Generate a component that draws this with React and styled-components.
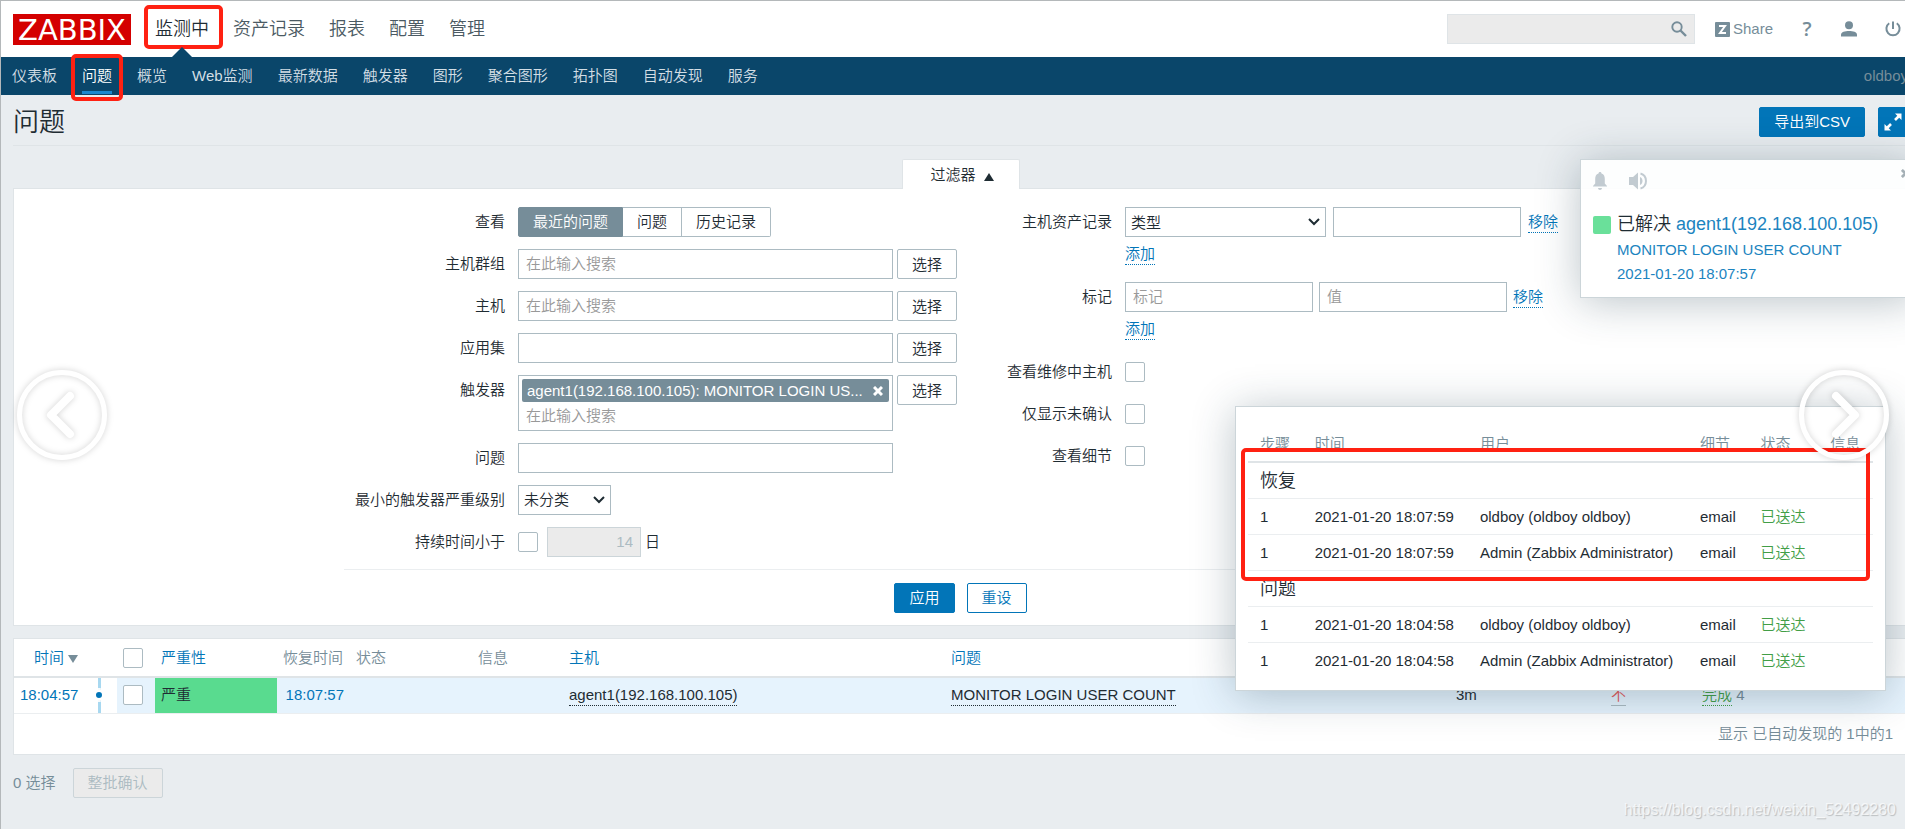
import styled, { createGlobalStyle, css } from "styled-components";

const GlobalStyle = createGlobalStyle`
  * {
    box-sizing: border-box;
  }
  body {
    margin: 0;
    overflow: hidden;
    background: #e9edf0;
    color: #1f2c33;
    font-family: "Liberation Sans", "Noto Sans CJK SC", sans-serif;
    font-weight: 350;
    font-size: 15px;
    line-height: 20px;
  }
  button, input, select {
    font: inherit;
    color: inherit;
    margin: 0;
  }
  a {
    color: #0275b8;
    text-decoration: none;
  }
`;

const mainMenu = ["监测中", "资产记录", "报表", "配置", "管理"];
const subMenu = [
  "仪表板",
  "问题",
  "概览",
  "Web监测",
  "最新数据",
  "触发器",
  "图形",
  "聚合图形",
  "拓扑图",
  "自动发现",
  "服务",
];
const actions = [
  {
    title: "恢复",
    rows: [
      ["2021-01-20 18:07:59", "oldboy (oldboy oldboy)"],
      ["2021-01-20 18:07:59", "Admin (Zabbix Administrator)"],
    ],
  },
  {
    title: "问题",
    rows: [
      ["2021-01-20 18:04:58", "oldboy (oldboy oldboy)"],
      ["2021-01-20 18:04:58", "Admin (Zabbix Administrator)"],
    ],
  },
];

const SearchIcon = () => (
  <svg width="16" height="16" viewBox="0 0 16 16" fill="none" stroke="#768d99">
    <circle cx="6" cy="6" r="4.7" strokeWidth="1.9" />
    <path d="M9.5 9.5 L15 15" strokeWidth="2.4" />
  </svg>
);

const ShareIcon = () => (
  <svg width="15" height="15" viewBox="0 0 15 15">
    <rect width="15" height="15" rx="1" fill="#768d99" />
    <path d="M4 4 H10 L5 11 H11" fill="none" stroke="#fff" strokeWidth="2" />
  </svg>
);

const UserIcon = () => (
  <svg width="16" height="16" viewBox="0 0 16 16" fill="#768d99">
    <circle cx="8" cy="4.3" r="4" />
    <path d="M0 15.5 V13.5 C0 11 4 10 8 10 S16 11 16 13.5 V15.5 Z" />
  </svg>
);

const PowerIcon = () => (
  <svg width="16" height="16" viewBox="0 0 16 16" fill="none" stroke="#768d99" strokeWidth="2">
    <path d="M8 0.5 V8" />
    <path d="M4.2 2.3 A6.6 6.6 0 1 0 11.8 2.3" />
  </svg>
);

const ExpandIcon = () => (
  <svg width="20" height="20" viewBox="0 0 20 20" fill="#fff" stroke="#fff">
    <path d="M12 1.5 H18.5 V8 Z M8 18.5 H1.5 V12 Z" stroke="none" />
    <path d="M12 8 L16 4 M8 12 L4 16" strokeWidth="2.6" />
  </svg>
);

const BellIcon = () => (
  <svg width="14" height="18" viewBox="0 0 14 18" fill="#c2cbd1">
    <path d="M7 0 C8 0 8.5 0.7 8.5 1.6 C11 2.5 11.8 4.5 11.8 7 V11.5 L14 14 V14.5 H0 V14 L2.2 11.5 V7 C2.2 4.5 3 2.5 5.5 1.6 C5.5 0.7 6 0 7 0 Z" />
    <path d="M5 16 H9 C9 17.2 8 18 7 18 S5 17.2 5 16 Z" />
  </svg>
);

const SpeakerIcon = () => (
  <svg width="18" height="18" viewBox="0 0 18 18" fill="#c2cbd1">
    <path d="M0 5 H4 L9 0.5 V17.5 L4 13 H0 Z" />
    <path d="M11 5 C13 6 13.5 7.5 13.5 9 S13 12 11 13 Z" />
    <path d="M11.5 1.5 C18.8 3.5 18.8 14.5 11.5 16.5" fill="none" stroke="#c2cbd1" strokeWidth="2" />
  </svg>
);

const CrossIcon = ({ color, size }) => (
  <svg width={size} height={size} viewBox="0 0 10 10" stroke={color} strokeWidth="3">
    <path d="M1 1 L9 9 M9 1 L1 9" />
  </svg>
);

const ArrowCircle = ({ flip }) => (
  <svg width="106" height="106" viewBox="0 0 106 106" fill="none" stroke="#fff">
    <circle cx="53" cy="53" r="42.5" strokeWidth="5" />
    <path
      d={flip ? "M45 34 L64 53 L45 72" : "M61 34 L42 53 L61 72"}
      strokeWidth="8"
      strokeLinecap="round"
      strokeLinejoin="round"
    />
  </svg>
);

const App = () => {
  return (
    <Viewport>
      <GlobalStyle />
      <Page>
        <Header>
          <Logo href="#">ZABBIX</Logo>
          <MainNav>
            {mainMenu.map((item, index) => (
              <MainLink key={item} href="#" $active={index === 0}>
                {item}
                {index === 0 && <Marker $top={4} $bottom={8} $side={-11} $right={-14} />}
              </MainLink>
            ))}
          </MainNav>
          <SearchBox>
            <input type="text" aria-label="搜索" />
            <IconButton aria-label="搜索">
              <SearchIcon />
            </IconButton>
          </SearchBox>
          <ShareLink href="#">
            <ShareIcon />
            Share
          </ShareLink>
          <UserLinks>
            <HelpLink href="#">?</HelpLink>
            <a href="#" aria-label="用户">
              <UserIcon />
            </a>
            <a href="#" aria-label="退出">
              <PowerIcon />
            </a>
          </UserLinks>
        </Header>

        <SubNav>
          {subMenu.map((item) => (
            <SubLink key={item} href="#" $active={item === "问题"}>
              {item}
              {item === "问题" && <Marker $top={-3} $bottom={-6} $side={-11} />}
            </SubLink>
          ))}
          <UserName>oldboy</UserName>
        </SubNav>

        <TitleBar>
          <h1>问题</h1>
          <Button $primary>导出到CSV</Button>
          <SquareButton $primary aria-label="全屏">
            <ExpandIcon />
          </SquareButton>
        </TitleBar>

        <Main>
          <FilterTab>
            过滤器 <Triangle $up />
          </FilterTab>
          <Filter>
            <FilterColumns>
              <Column>
                <Row>
                  <Label $width={161}>查看</Label>
                  <Segments>
                    <Segment $active>最近的问题</Segment>
                    <Segment>问题</Segment>
                    <Segment>历史记录</Segment>
                  </Segments>
                </Row>
                <Row>
                  <Label as="label" htmlFor="groups" $width={161}>主机群组</Label>
                  <Field>
                    <Input id="groups" $width={375} placeholder="在此输入搜索" />
                    <Button>选择</Button>
                  </Field>
                </Row>
                <Row>
                  <Label as="label" htmlFor="hosts" $width={161}>主机</Label>
                  <Field>
                    <Input id="hosts" $width={375} placeholder="在此输入搜索" />
                    <Button>选择</Button>
                  </Field>
                </Row>
                <Row>
                  <Label as="label" htmlFor="application" $width={161}>应用集</Label>
                  <Field>
                    <Input id="application" $width={375} />
                    <Button>选择</Button>
                  </Field>
                </Row>
                <Row>
                  <Label as="label" htmlFor="triggers" $width={161}>触发器</Label>
                  <Field>
                    <MultiSelect>
                      <Tag>
                        <span>agent1(192.168.100.105): MONITOR LOGIN US...</span>
                        <IconButton aria-label="移除">
                          <CrossIcon color="#fff" size={10} />
                        </IconButton>
                      </Tag>
                      <input id="triggers" placeholder="在此输入搜索" />
                    </MultiSelect>
                    <Button>选择</Button>
                  </Field>
                </Row>
                <Row>
                  <Label as="label" htmlFor="problem" $width={161}>问题</Label>
                  <Input id="problem" $width={375} />
                </Row>
                <Row>
                  <Label as="label" htmlFor="severity" $width={161}>最小的触发器严重级别</Label>
                  <Select id="severity" $width={93}>
                    <option>未分类</option>
                  </Select>
                </Row>
                <Row>
                  <Label as="label" htmlFor="age" $width={161}>持续时间小于</Label>
                  <Field>
                    <Checkbox id="age" />
                    <AgeInput aria-label="日" defaultValue="14" disabled $width={94} />
                    日
                  </Field>
                </Row>
              </Column>

              <Column>
                <Row>
                  <Label as="label" htmlFor="inventory" $width={155}>主机资产记录</Label>
                  <FieldStack>
                    <Field $gap={7}>
                      <Select id="inventory" $width={201}>
                        <option>类型</option>
                      </Select>
                      <Input aria-label="主机资产记录" $width={188} />
                      <DottedLink href="#">移除</DottedLink>
                    </Field>
                    <DottedLink href="#">添加</DottedLink>
                  </FieldStack>
                </Row>
                <Row>
                  <Label as="label" htmlFor="tag" $width={155}>标记</Label>
                  <FieldStack>
                    <Field $gap={6}>
                      <Input id="tag" $width={188} placeholder="标记" />
                      <Input aria-label="值" $width={188} placeholder="值" />
                      <DottedLink href="#">移除</DottedLink>
                    </Field>
                    <DottedLink href="#">添加</DottedLink>
                  </FieldStack>
                </Row>
                {["查看维修中主机", "仅显示未确认", "查看细节"].map((item) => (
                  <Row key={item}>
                    <Label as="label" htmlFor={item} $width={155}>{item}</Label>
                    <Field>
                      <Checkbox id={item} />
                    </Field>
                  </Row>
                ))}
              </Column>
            </FilterColumns>
            <FilterButtons>
              <Button $primary>应用</Button>
              <Button $outline>重设</Button>
            </FilterButtons>
          </Filter>

          <TablePanel>
            <ProblemTable>
              <colgroup>
                <col style={{ width: 70 }} />
                <col style={{ width: 33 }} />
                <col style={{ width: 38 }} />
                <col style={{ width: 122 }} />
                <col style={{ width: 73 }} />
                <col style={{ width: 122 }} />
                <col style={{ width: 91 }} />
                <col style={{ width: 382 }} />
                <col style={{ width: 505 }} />
                <col style={{ width: 155 }} />
                <col style={{ width: 91 }} />
                <col />
              </colgroup>
              <thead>
                <tr>
                  <th className="right">
                    <SortLink href="#">
                      时间 <Triangle />
                    </SortLink>
                  </th>
                  <th />
                  <th>
                    <Checkbox aria-label="全选" />
                  </th>
                  <th>
                    <a href="#">严重性</a>
                  </th>
                  <th>恢复时间</th>
                  <th>状态</th>
                  <th>信息</th>
                  <th>
                    <a href="#">主机</a>
                  </th>
                  <th>
                    <a href="#">问题</a>
                  </th>
                  <th colSpan={3} />
                </tr>
              </thead>
              <tbody>
                <tr>
                  <td className="right plain">
                    <a href="#">18:04:57</a>
                  </td>
                  <td className="timeline plain">
                    <TimelineDot />
                  </td>
                  <td>
                    <Checkbox aria-label="选择" />
                  </td>
                  <td className="severity">严重</td>
                  <td className="right">
                    <a href="#">18:07:57</a>
                  </td>
                  <td />
                  <td />
                  <td>
                    <DottedLink href="#" $color="#1f2c33">agent1(192.168.100.105)</DottedLink>
                  </td>
                  <td>
                    <DottedLink href="#" $color="#1f2c33">MONITOR LOGIN USER COUNT</DottedLink>
                  </td>
                  <td>3m</td>
                  <td>
                    <AckLink href="#">不</AckLink>
                  </td>
                  <td>
                    <DottedLink href="#" $color="#429e47">完成</DottedLink> <Muted>4</Muted>
                  </td>
                </tr>
              </tbody>
            </ProblemTable>
            <TableStats>显示 已自动发现的 1中的1</TableStats>
          </TablePanel>

          <BulkActions>
            <Muted>0 选择</Muted>
            <Button disabled>整批确认</Button>
          </BulkActions>
        </Main>
      </Page>

      <Notification>
        <NotificationBar>
          <IconButton aria-label="暂停">
            <BellIcon />
          </IconButton>
          <IconButton aria-label="静音">
            <SpeakerIcon />
          </IconButton>
          <IconButton aria-label="关闭">
            <CrossIcon color="#a5b0b6" size={9} />
          </IconButton>
        </NotificationBar>
        <NotificationBody>
          <SeverityBox />
          <div>
            <h4>
              已解决 <a href="#">agent1(192.168.100.105)</a>
            </h4>
            <a href="#">MONITOR LOGIN USER COUNT</a>
            <a href="#">2021-01-20 18:07:57</a>
          </div>
        </NotificationBody>
      </Notification>

      <Popup>
        <ActionTable>
          <thead>
            <tr>
              <th>步骤</th>
              <th>时间</th>
              <th>用户</th>
              <th>细节</th>
              <th>状态</th>
              <th>信息</th>
            </tr>
          </thead>
          {actions.map((group) => (
            <tbody key={group.title}>
              <tr>
                <th colSpan={6}>{group.title}</th>
              </tr>
              {group.rows.map(([time, user]) => (
                <tr key={user}>
                  <td>1</td>
                  <td>{time}</td>
                  <td>{user}</td>
                  <td>email</td>
                  <td className="sent">已送达</td>
                  <td />
                </tr>
              ))}
            </tbody>
          ))}
        </ActionTable>
        <Marker $top={41} $bottom={109} $side={5} $right={15} />
      </Popup>

      <PageArrow $side="left" aria-label="上一张">
        <ArrowCircle />
      </PageArrow>
      <PageArrow $side="right" aria-label="下一张">
        <ArrowCircle flip />
      </PageArrow>
      <Watermark>https://blog.csdn.net/weixin_52492280</Watermark>
    </Viewport>
  );
};

const Viewport = styled.div`
  position: relative;
  min-height: 100vh;
  overflow: hidden;
  border-top: 1px solid #b4b8ba;
  border-left: 1px solid #b4b8ba;
`;

/* the page is a little wider than the window */
const Page = styled.div`
  width: calc(100% + 15px);
`;

const Marker = styled.span`
  position: absolute;
  top: ${(props) => props.$top}px;
  bottom: ${(props) => props.$bottom}px;
  left: ${(props) => props.$side}px;
  right: ${(props) => props.$right ?? props.$side}px;
  border: 4px solid #ff2112;
  border-radius: 5px;
  pointer-events: none;
`;

const Header = styled.header`
  display: flex;
  align-items: center;
  height: 56px;
  padding: 0 19px 0 12px;
  background: #fff;
`;

const Logo = styled.a`
  width: 118px;
  height: 31px;
  background: #d40000;
  color: #fff;
  font-family: "DejaVu Sans", sans-serif;
  font-weight: 400;
  font-size: 29px;
  line-height: 32px;
  text-align: center;
`;

const MainNav = styled.nav`
  display: flex;
  gap: 24px;
  margin-left: 24px;
  margin-right: auto;
`;

const MainLink = styled.a`
  position: relative;
  font-size: 18px;
  line-height: 56px;
  color: ${(props) => (props.$active ? "#1f2c33" : "#4b5a63")};
  ${(props) =>
    props.$active &&
    css`
      &::after {
        content: "";
        position: absolute;
        bottom: 0;
        left: calc(50% - 10px);
        border: 10px solid transparent;
        border-top: 0;
        border-bottom-color: #0a466a;
      }
    `}
`;

const IconButton = styled.button`
  display: flex;
  padding: 0;
  border: 0;
  background: none;
`;

const SearchBox = styled.form`
  display: flex;
  align-items: center;
  width: 248px;
  height: 30px;
  padding-right: 7px;
  background: #ebebeb;
  border: 1px solid #dfe4e7;
  input {
    flex: 1;
    min-width: 0;
    border: 0;
    background: none;
  }
`;

const ShareLink = styled.a`
  display: flex;
  align-items: center;
  gap: 3px;
  margin-left: 20px;
  color: #768d99;
`;

const UserLinks = styled.div`
  display: flex;
  align-items: center;
  gap: 28px;
  margin-left: 28px;
  a {
    display: flex;
  }
`;

const HelpLink = styled.a`
  justify-content: center;
  width: 12px;
  color: #768d99;
  font-family: "Open Sans", sans-serif;
  font-weight: 600;
  font-size: 20px;
`;

const SubNav = styled.nav`
  display: flex;
  gap: 25px;
  height: 38px;
  padding: 0 12px 0 11px;
  background: #0a466a;
`;

const SubLink = styled.a`
  position: relative;
  line-height: 38px;
  color: ${(props) => (props.$active ? "#fff" : "#d3dee5")};
  ${(props) =>
    props.$active &&
    css`
      &::after {
        content: "";
        position: absolute;
        left: 0;
        right: 0;
        bottom: 1px;
        height: 3px;
        background: #1a87ce;
      }
    `}
`;

const UserName = styled.span`
  margin-left: auto;
  line-height: 38px;
  color: #768d99;
`;

const buttonColors = (props) => {
  if (props.disabled) return "background: #ebebeb; border-color: #ccd5d9; color: #acbbc2;";
  if (props.$primary) return "background: #0275b8; border-color: #0275b8; color: #fff;";
  if (props.$outline) return "background: #fff; border-color: #0275b8; color: #0275b8;";
  return "background: #fff; border-color: #acbbc2; color: #1f2c33;";
};

const Button = styled.button`
  height: 30px;
  padding: 0 14px;
  border: 1px solid;
  border-radius: 2px;
  white-space: nowrap;
  ${buttonColors}
`;

const SquareButton = styled(Button)`
  display: flex;
  align-items: center;
  justify-content: center;
  width: 30px;
  padding: 0;
`;

const TitleBar = styled.div`
  display: flex;
  align-items: center;
  gap: 13px;
  height: 51px;
  margin: 0 12px;
  padding-top: 3px;
  border-bottom: 1px solid #dfe4e7;
  h1 {
    flex: 1;
    margin: 0;
    font-weight: 350;
    font-size: 26px;
  }
`;

const Main = styled.main`
  padding: 13px 12px 0;
`;

const FilterTab = styled.button`
  position: relative;
  display: flex;
  align-items: center;
  gap: 8px;
  width: 118px;
  height: 30px;
  margin: 0 auto -1px;
  padding: 0 24px 0 28px;
  background: #fff;
  border: 1px solid #dfe4e7;
  border-bottom: 0;
  border-radius: 2px 2px 0 0;
`;

const Triangle = styled.span`
  display: inline-block;
  border: 5px solid transparent;
  ${(props) =>
    props.$up
      ? "border-top: 0; border-bottom: 8px solid #1f2c33; margin-top: 4px;"
      : "border-bottom: 0; border-top: 8px solid #768d99; margin-top: 2px;"}
`;

const Filter = styled.form`
  padding: 18px 12px 12px;
  background: #fff;
  border: 1px solid #dfe4e7;
`;

const FilterColumns = styled.div`
  display: flex;
  max-width: 1233px;
  margin: 0 auto;
  padding-bottom: 12px;
  border-bottom: 1px solid #ebeef0;
`;

const Column = styled.div`
  display: flex;
  flex-direction: column;
  gap: 12px;
`;

const Row = styled.div`
  display: flex;
  gap: 13px;
`;

const Label = styled.span`
  width: ${(props) => props.$width}px;
  line-height: 30px;
  text-align: right;
  white-space: nowrap;
`;

const Field = styled.div`
  display: flex;
  align-items: flex-start;
  gap: ${(props) => props.$gap ?? 4}px;
  line-height: 30px;
`;

const FieldStack = styled.div`
  display: flex;
  flex-direction: column;
  align-items: flex-start;
  gap: 2px;
`;

const Segments = styled.div`
  display: flex;
`;

const Segment = styled.button`
  height: 30px;
  padding: 0 14px;
  border: 1px solid #acbbc2;
  background: #fff;
  & + & {
    border-left: 0;
  }
  &:first-child {
    border-radius: 2px 0 0 2px;
  }
  &:last-child {
    border-radius: 0 2px 2px 0;
  }
  ${(props) => props.$active && "background: #768d99; border-color: #768d99; color: #fff;"}
`;

const Input = styled.input`
  width: ${(props) => props.$width}px;
  height: 30px;
  padding: 0 7px;
  background: #fff;
  border: 1px solid #acbbc2;
  &::placeholder {
    color: #999;
  }
`;

const AgeInput = styled(Input)`
  margin-left: 5px;
  background: #ebebeb;
  border-color: #ccd5d9;
  color: #acbbc2;
  text-align: right;
`;

const chevron = `url("data:image/svg+xml,%3Csvg xmlns='http://www.w3.org/2000/svg' width='12' height='8' fill='none' stroke='%231f2c33' stroke-width='2'%3E%3Cpath d='M1 1 L6 6 L11 1'/%3E%3C/svg%3E")`;

const Select = styled.select`
  appearance: none;
  width: ${(props) => props.$width}px;
  height: 30px;
  padding: 0 5px;
  background: #fff ${chevron} right 5px center no-repeat;
  border: 1px solid #acbbc2;
  border-radius: 0;
`;

const Checkbox = styled.input.attrs({ type: "checkbox" })`
  appearance: none;
  display: block;
  width: 20px;
  height: 20px;
  background: #fff;
  border: 1px solid #acbbc2;
  border-radius: 2px;
  ${Field} & {
    margin: 5px 0;
  }
`;

const MultiSelect = styled.div`
  width: 375px;
  height: 56px;
  padding: 3px;
  border: 1px solid #acbbc2;
  input {
    display: block;
    width: 100%;
    height: 27px;
    padding: 0 4px;
    border: 0;
    background: none;
  }
  input::placeholder {
    color: #999;
  }
`;

const Tag = styled.div`
  display: flex;
  align-items: center;
  justify-content: space-between;
  height: 23px;
  padding: 0 6px 0 5px;
  background: #768d99;
  border-radius: 2px;
  color: #fff;
  white-space: nowrap;
`;

const DottedLink = styled.a`
  display: inline-block;
  line-height: 20px;
  border-bottom: 1px dotted;
  color: ${(props) => props.$color ?? "#0275b8"};
  ${Field} & {
    margin-top: 5px;
  }
  ${FieldStack} > & {
    margin: 5px 0 5px;
  }
`;

const AckLink = styled(DottedLink)`
  color: #e45959;
  border-bottom: 1px solid #acbbc2;
`;

const FilterButtons = styled.div`
  display: flex;
  justify-content: center;
  gap: 12px;
  padding-top: 13px;
`;

const TablePanel = styled.section`
  margin-top: 12px;
  background: #fff;
  border: 1px solid #dfe4e7;
`;

const ProblemTable = styled.table`
  width: 100%;
  table-layout: fixed;
  border-collapse: collapse;
  th,
  td {
    padding: 0 6px;
    text-align: left;
    white-space: nowrap;
  }
  th {
    height: 38px;
    font-weight: 350;
    color: #768d99;
    border-bottom: 2px solid #dfe4e7;
  }
  td {
    height: 36px;
    background: #e6f3fd;
    border-bottom: 1px solid #ebeef0;
  }
  .right {
    text-align: right;
  }
  .plain {
    background: #fff;
  }
  .severity {
    background: #59db8f;
  }
  .timeline {
    background: linear-gradient(#a8d8f0, #a8d8f0) 14px 0 / 3px 100% no-repeat #fff;
  }
`;

const SortLink = styled.a`
  display: inline-flex;
  align-items: center;
  gap: 4px;
`;

const TimelineDot = styled.span`
  display: block;
  width: 12px;
  height: 12px;
  margin-left: 3px;
  background: #0275b8;
  border: 3px solid #fff;
  border-radius: 50%;
  outline: 1px solid #fff;
`;

const Muted = styled.span`
  color: #768d99;
`;

const TableStats = styled.div`
  padding: 10px 14px 10px 0;
  text-align: right;
  color: #768d99;
`;

const BulkActions = styled.div`
  display: flex;
  align-items: center;
  gap: 17px;
  margin-top: 13px;
`;

const floating = css`
  position: absolute;
  border: 1px solid #ccd5d9;
  box-shadow: 0 4px 40px rgba(31, 60, 75, 0.3);
`;

const Notification = styled.aside`
  ${floating}
  top: 158px;
  right: -12px;
  width: 337px;
  height: 139px;
  background: rgba(255, 255, 255, 0.9);
`;

const NotificationBar = styled.div`
  display: flex;
  align-items: center;
  gap: 22px;
  padding: 12px 6px 0 12px;
  button:last-child {
    margin: -16px 0 0 auto;
  }
`;

const NotificationBody = styled.div`
  display: flex;
  gap: 6px;
  padding: 20px 12px;
  h4 {
    margin: 0;
    font-weight: 350;
    font-size: 18px;
    line-height: 28px;
  }
  a {
    color: #1c84c0;
  }
  div > a {
    display: block;
    line-height: 24px;
  }
`;

const SeverityBox = styled.span`
  width: 18px;
  height: 18px;
  margin-top: 6px;
  background: #6ae09a;
  border-radius: 2px;
`;

const Popup = styled.section`
  ${floating}
  top: 405px;
  right: 19px;
  width: 651px;
  padding: 18px 12px 12px;
  background: #fff;
`;

const ActionTable = styled.table`
  width: 100%;
  border-collapse: collapse;
  th,
  td {
    height: 36px;
    padding: 1px 12px 0;
    text-align: left;
    white-space: nowrap;
    border-bottom: 1px solid #ebeef0;
  }
  th {
    font-weight: 350;
  }
  thead th {
    height: 37px;
    color: #768d99;
    border-bottom: 2px solid #dfe4e7;
  }
  tbody th {
    font-size: 18px;
  }
  tbody:last-child tr:last-child td {
    border-bottom: 0;
  }
  .sent {
    color: #429e47;
  }
`;

const PageArrow = styled.button`
  position: absolute;
  top: 361px;
  ${(props) => (props.$side === "left" ? "left: 8px;" : "right: 8px;")}
  display: flex;
  padding: 0;
  border: 0;
  background: none;
  filter: drop-shadow(0 0 3px rgba(0, 0, 0, 0.18));
`;

const Watermark = styled.span`
  position: absolute;
  right: 9px;
  bottom: 9px;
  font-size: 16px;
  color: rgba(255, 255, 255, 0.7);
  text-shadow: 1px 1px 1px rgba(0, 0, 0, 0.2);
`;

export default App;
